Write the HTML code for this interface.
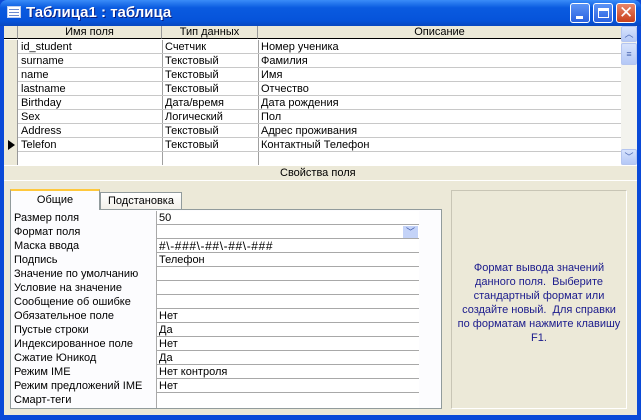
<!DOCTYPE html>
<html><head><meta charset="utf-8"><style>
*{margin:0;padding:0;box-sizing:border-box}
body{width:641px;height:420px;overflow:hidden;background:#0A4AD8;font-family:"Liberation Sans","DejaVu Sans",sans-serif;font-size:11px;color:#000;position:relative}
.abs{position:absolute}
#title{left:0;top:0;width:641px;height:26px;background:linear-gradient(#3A8CF8,#0A5BE0 30%,#0653DA 80%,#0848C0);border-radius:7px 7px 0 0}
#title .t{left:26px;top:4px;color:#fff;font-weight:bold;font-size:15px;text-shadow:1px 1px #0A1E80}
.btn{top:3px;width:20px;height:20px;border:1px solid #fff;border-radius:3px;background:linear-gradient(#5C93F5,#2A62E0)}
#client{left:4px;top:26px;width:633px;height:389px;background:#ECE9D8}
.grid{left:0;top:0;width:617px;height:139px;background:#fff}
.hdr{top:0;height:13px;background:#ECE9D8;border-bottom:1px solid #000;text-align:center;line-height:13px}
.row{height:14px;border-bottom:1px solid #C8C8C8;line-height:14px;white-space:nowrap}
.cell{position:absolute;top:0;padding-left:3px}
.sb{left:617px;top:0;width:16px;height:139px;background:#F3F3EE}
.sbb{width:16px;height:16px;background:linear-gradient(#D6E2FC,#B4C8F6);border:1px solid #B4C5F0;border-radius:2px;left:0;color:#4A66B0;font-size:9px;text-align:center;line-height:14px}
.lbl{left:6px;width:146px;padding-left:4px}
.val{left:152px;width:263px;background:#fff;border-bottom:1px solid #A8A8A8;border-left:1px solid #A8A8A8;padding-left:2px}
</style></head><body>
<div id="title" class="abs">
 <div class="abs" style="left:7px;top:6px;width:14px;height:12px;background:#fff;border:1px solid #C0D0F0"><div style="margin:2px 1px;height:1px;background:#6C8CD0;box-shadow:0 3px #6C8CD0,0 6px #6C8CD0"></div></div>
 <div class="t abs">Таблица1 : таблица</div>
 <div class="btn abs" style="left:570px"><div class="abs" style="left:5px;top:12px;width:7px;height:3px;background:#fff"></div></div>
 <div class="btn abs" style="left:593px"><div class="abs" style="left:4px;top:4px;width:11px;height:10px;border:1px solid #fff;border-top-width:3px"></div></div>
 <div class="btn abs" style="left:616px;background:linear-gradient(#E8866A,#C8401C)"><div class="abs" style="left:2px;top:-1px;color:#fff;font-size:17px;font-weight:bold">✕</div></div>
</div>
<div id="client" class="abs">
 <div class="grid abs">
  <div class="hdr abs" style="left:0;width:14px;border-right:1px solid #999"></div>
  <div class="hdr abs" style="left:14px;width:144px;border-right:1px solid #999">Имя поля</div>
  <div class="hdr abs" style="left:158px;width:96px;border-right:1px solid #999">Тип данных</div>
  <div class="hdr abs" style="left:254px;width:363px">Описание</div>
  <div class="abs" style="left:0;top:14px;width:14px;height:125px;background:#ECE9D8;border-right:1px solid #999"></div>
  <div class="abs" style="left:158px;top:14px;width:1px;height:125px;background:#A0A0A0"></div>
  <div class="abs" style="left:254px;top:14px;width:1px;height:125px;background:#A0A0A0"></div>
  <div class="abs" style="left:14px;top:14px;width:603px">
   <div class="row" style="position:relative"><span class="cell">id_student</span><span class="cell" style="left:144px">Счетчик</span><span class="cell" style="left:240px">Номер ученика</span></div>
   <div class="row" style="position:relative"><span class="cell">surname</span><span class="cell" style="left:144px">Текстовый</span><span class="cell" style="left:240px">Фамилия</span></div>
   <div class="row" style="position:relative"><span class="cell">name</span><span class="cell" style="left:144px">Текстовый</span><span class="cell" style="left:240px">Имя</span></div>
   <div class="row" style="position:relative"><span class="cell">lastname</span><span class="cell" style="left:144px">Текстовый</span><span class="cell" style="left:240px">Отчество</span></div>
   <div class="row" style="position:relative"><span class="cell">Birthday</span><span class="cell" style="left:144px">Дата/время</span><span class="cell" style="left:240px">Дата рождения</span></div>
   <div class="row" style="position:relative"><span class="cell">Sex</span><span class="cell" style="left:144px">Логический</span><span class="cell" style="left:240px">Пол</span></div>
   <div class="row" style="position:relative"><span class="cell">Address</span><span class="cell" style="left:144px">Текстовый</span><span class="cell" style="left:240px">Адрес проживания</span></div>
   <div class="row" style="position:relative"><span class="cell">Telefon</span><span class="cell" style="left:144px">Текстовый</span><span class="cell" style="left:240px">Контактный Телефон</span></div>
  </div>
  <div class="abs" style="left:4px;top:114px;width:0;height:0;border-left:7px solid #000;border-top:5px solid transparent;border-bottom:5px solid transparent"></div>
 </div>
 <div class="sb abs">
  <div class="sbb abs" style="top:0">︿</div>
  <div class="sbb abs" style="top:17px;height:22px;line-height:20px">≡</div>
  <div class="sbb abs" style="top:123px">﹀</div>
 </div>
 <div class="abs" style="left:0;top:139px;width:633px;height:15px;border-top:1px solid #fff"><div class="abs" style="left:276px;top:1px">Свойства поля</div></div>
 <div class="abs" style="left:0;top:154px;width:633px;height:1px;background:#A8A698;border-bottom:1px solid #fff"></div>
 <div class="abs" style="left:96px;top:166px;width:82px;height:18px;border:1px solid #919B9C;border-bottom:none;background:linear-gradient(#fff,#F0EFE8);text-align:center;line-height:17px">Подстановка</div>
 <div class="abs" style="left:6px;top:183px;width:432px;height:200px;border:1px solid #919B9C;background:#FCFCFE"></div>
 <div class="abs" style="left:6px;top:163px;width:90px;height:21px;border:1px solid #919B9C;border-top:2px solid #FFC83C;border-bottom:none;background:#FCFCFE;text-align:center;line-height:18px">Общие</div>
 <div class="abs" style="left:0;top:185px;width:440px">
  <div class="abs val" style="top:0;height:196px;border-right:1px solid #A8A8A8;border-bottom:none"></div>
 </div>
 <div class="abs" style="left:447px;top:164px;width:176px;height:219px;border:1px solid #fff;border-left-color:#C8C5B5;border-top-color:#C8C5B5"></div>
 <div class="abs" style="left:452px;top:235px;width:166px;text-align:center;color:#1A1A8C;line-height:14px">Формат вывода значений данного поля.&nbsp; Выберите стандартный формат или создайте новый.&nbsp; Для справки по форматам нажмите клавишу F1.</div>
</div>
<div class="abs" style="left:4px;top:211px;width:440px;height:198px;line-height:14px">
 <div class="abs lbl" style="top:0">Размер поля</div><div class="abs val" style="top:0;height:14px">50</div>
 <div class="abs lbl" style="top:14px">Формат поля</div><div class="abs val" style="top:14px;height:14px"><div class="abs" style="right:1px;top:1px;width:15px;height:12px;background:#C4D3F8;color:#3A56A8;font-size:9px;text-align:center;line-height:12px">﹀</div></div>
 <div class="abs lbl" style="top:28px">Маска ввода</div><div class="abs val" style="top:28px;height:14px;font-size:12px;letter-spacing:0.6px">#\-###\-##\-##\-###</div>
 <div class="abs lbl" style="top:42px">Подпись</div><div class="abs val" style="top:42px;height:14px">Телефон</div>
 <div class="abs lbl" style="top:56px">Значение по умолчанию</div><div class="abs val" style="top:56px;height:14px"></div>
 <div class="abs lbl" style="top:70px">Условие на значение</div><div class="abs val" style="top:70px;height:14px"></div>
 <div class="abs lbl" style="top:84px">Сообщение об ошибке</div><div class="abs val" style="top:84px;height:14px"></div>
 <div class="abs lbl" style="top:98px">Обязательное поле</div><div class="abs val" style="top:98px;height:14px">Нет</div>
 <div class="abs lbl" style="top:112px">Пустые строки</div><div class="abs val" style="top:112px;height:14px">Да</div>
 <div class="abs lbl" style="top:126px">Индексированное поле</div><div class="abs val" style="top:126px;height:14px">Нет</div>
 <div class="abs lbl" style="top:140px">Сжатие Юникод</div><div class="abs val" style="top:140px;height:14px">Да</div>
 <div class="abs lbl" style="top:154px">Режим IME</div><div class="abs val" style="top:154px;height:14px">Нет контроля</div>
 <div class="abs lbl" style="top:168px">Режим предложений IME</div><div class="abs val" style="top:168px;height:14px">Нет</div>
 <div class="abs lbl" style="top:182px">Смарт-теги</div><div class="abs val" style="top:182px;height:15px;border-bottom:none"></div>
</div>
</body></html>
